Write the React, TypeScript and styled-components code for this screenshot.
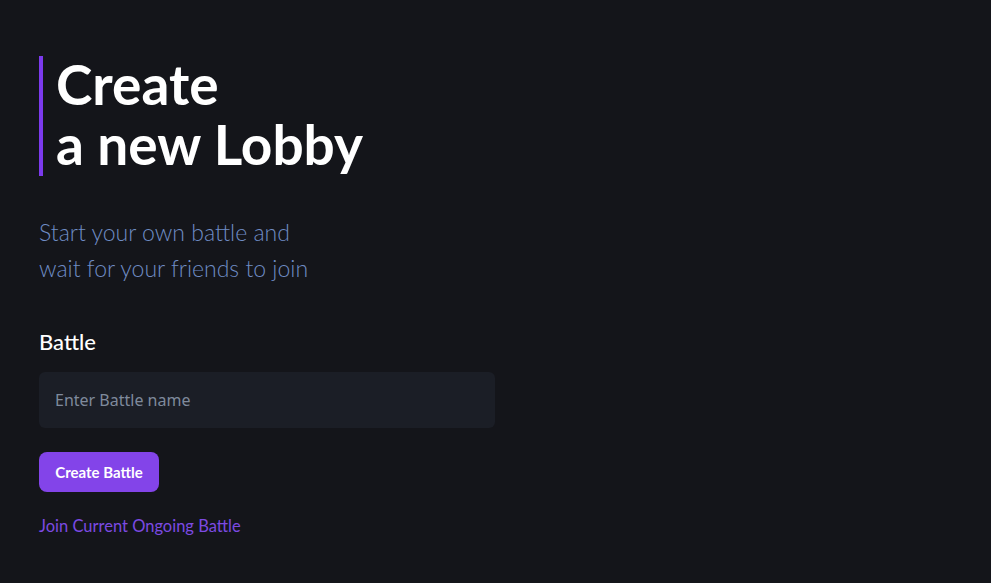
import React from "react";
import styled, { createGlobalStyle } from "styled-components";

const Global = createGlobalStyle`
  html, body { margin: 0; padding: 0; background: #14151a; }
  body { font-family: Lato, "Noto Sans", sans-serif; }
  * { box-sizing: border-box; }
`;

const Page = styled.main`
  min-height: 583px;
  background: #14151a;
  padding: 56px 39px 0;
  display: flex;
  flex-direction: column;
  align-items: flex-start;
`;

const Title = styled.h1`
  margin: 0;
  border-left: 4px solid #7c3aed;
  padding: 0 0 0 13px;
  font-family: Lato, sans-serif;
  font-weight: 700;
  font-size: 55px;
  line-height: 60px;
  color: #ffffff;
`;

const TitleLine = styled.span`
  display: block;
  height: 60px;
  line-height: 56px;
`;

const Subtitle = styled.p`
  margin: 38px 0 0;
  font-family: Lato, sans-serif;
  font-weight: 300;
  font-size: 23px;
  line-height: 36px;
  color: #6f8cc4;
`;

const Label = styled.label`
  margin-top: 43px;
  font-family: Lato, sans-serif;
  font-weight: 500;
  font-size: 22px;
  line-height: 26px;
  color: #ffffff;
`;

const Input = styled.input`
  margin-top: 17px;
  width: 456px;
  height: 56px;
  border: none;
  outline: none;
  border-radius: 6px;
  background: #1b1e26;
  padding: 0 16px;
  font-family: "Noto Sans", sans-serif;
  font-size: 16px;
  color: #ffffff;
  &::placeholder { color: #7f8a9c; }
`;

const Button = styled.button`
  margin-top: 24px;
  width: 120px;
  height: 40px;
  border: none;
  border-radius: 8px;
  background: #8344e9;
  color: #ffffff;
  font-family: Lato, sans-serif;
  font-weight: 700;
  font-size: 15px;
  cursor: pointer;
`;

const Link = styled.a`
  margin-top: 24px;
  font-family: Lato, sans-serif;
  font-size: 16.5px;
  line-height: 20px;
  color: #7c4ae2;
  text-decoration: none;
`;

export default function App() {
  return (
    <>
      <Global />
      <Page>
        <Title>
          <TitleLine>Create</TitleLine>
          <TitleLine>a new Lobby</TitleLine>
        </Title>
        <Subtitle>
          Start your own battle and
          <br />
          wait for your friends to join
        </Subtitle>
        <Label htmlFor="battle">Battle</Label>
        <Input id="battle" placeholder="Enter Battle name" />
        <Button>Create Battle</Button>
        <Link href="#">Join Current Ongoing Battle</Link>
      </Page>
    </>
  );
}
